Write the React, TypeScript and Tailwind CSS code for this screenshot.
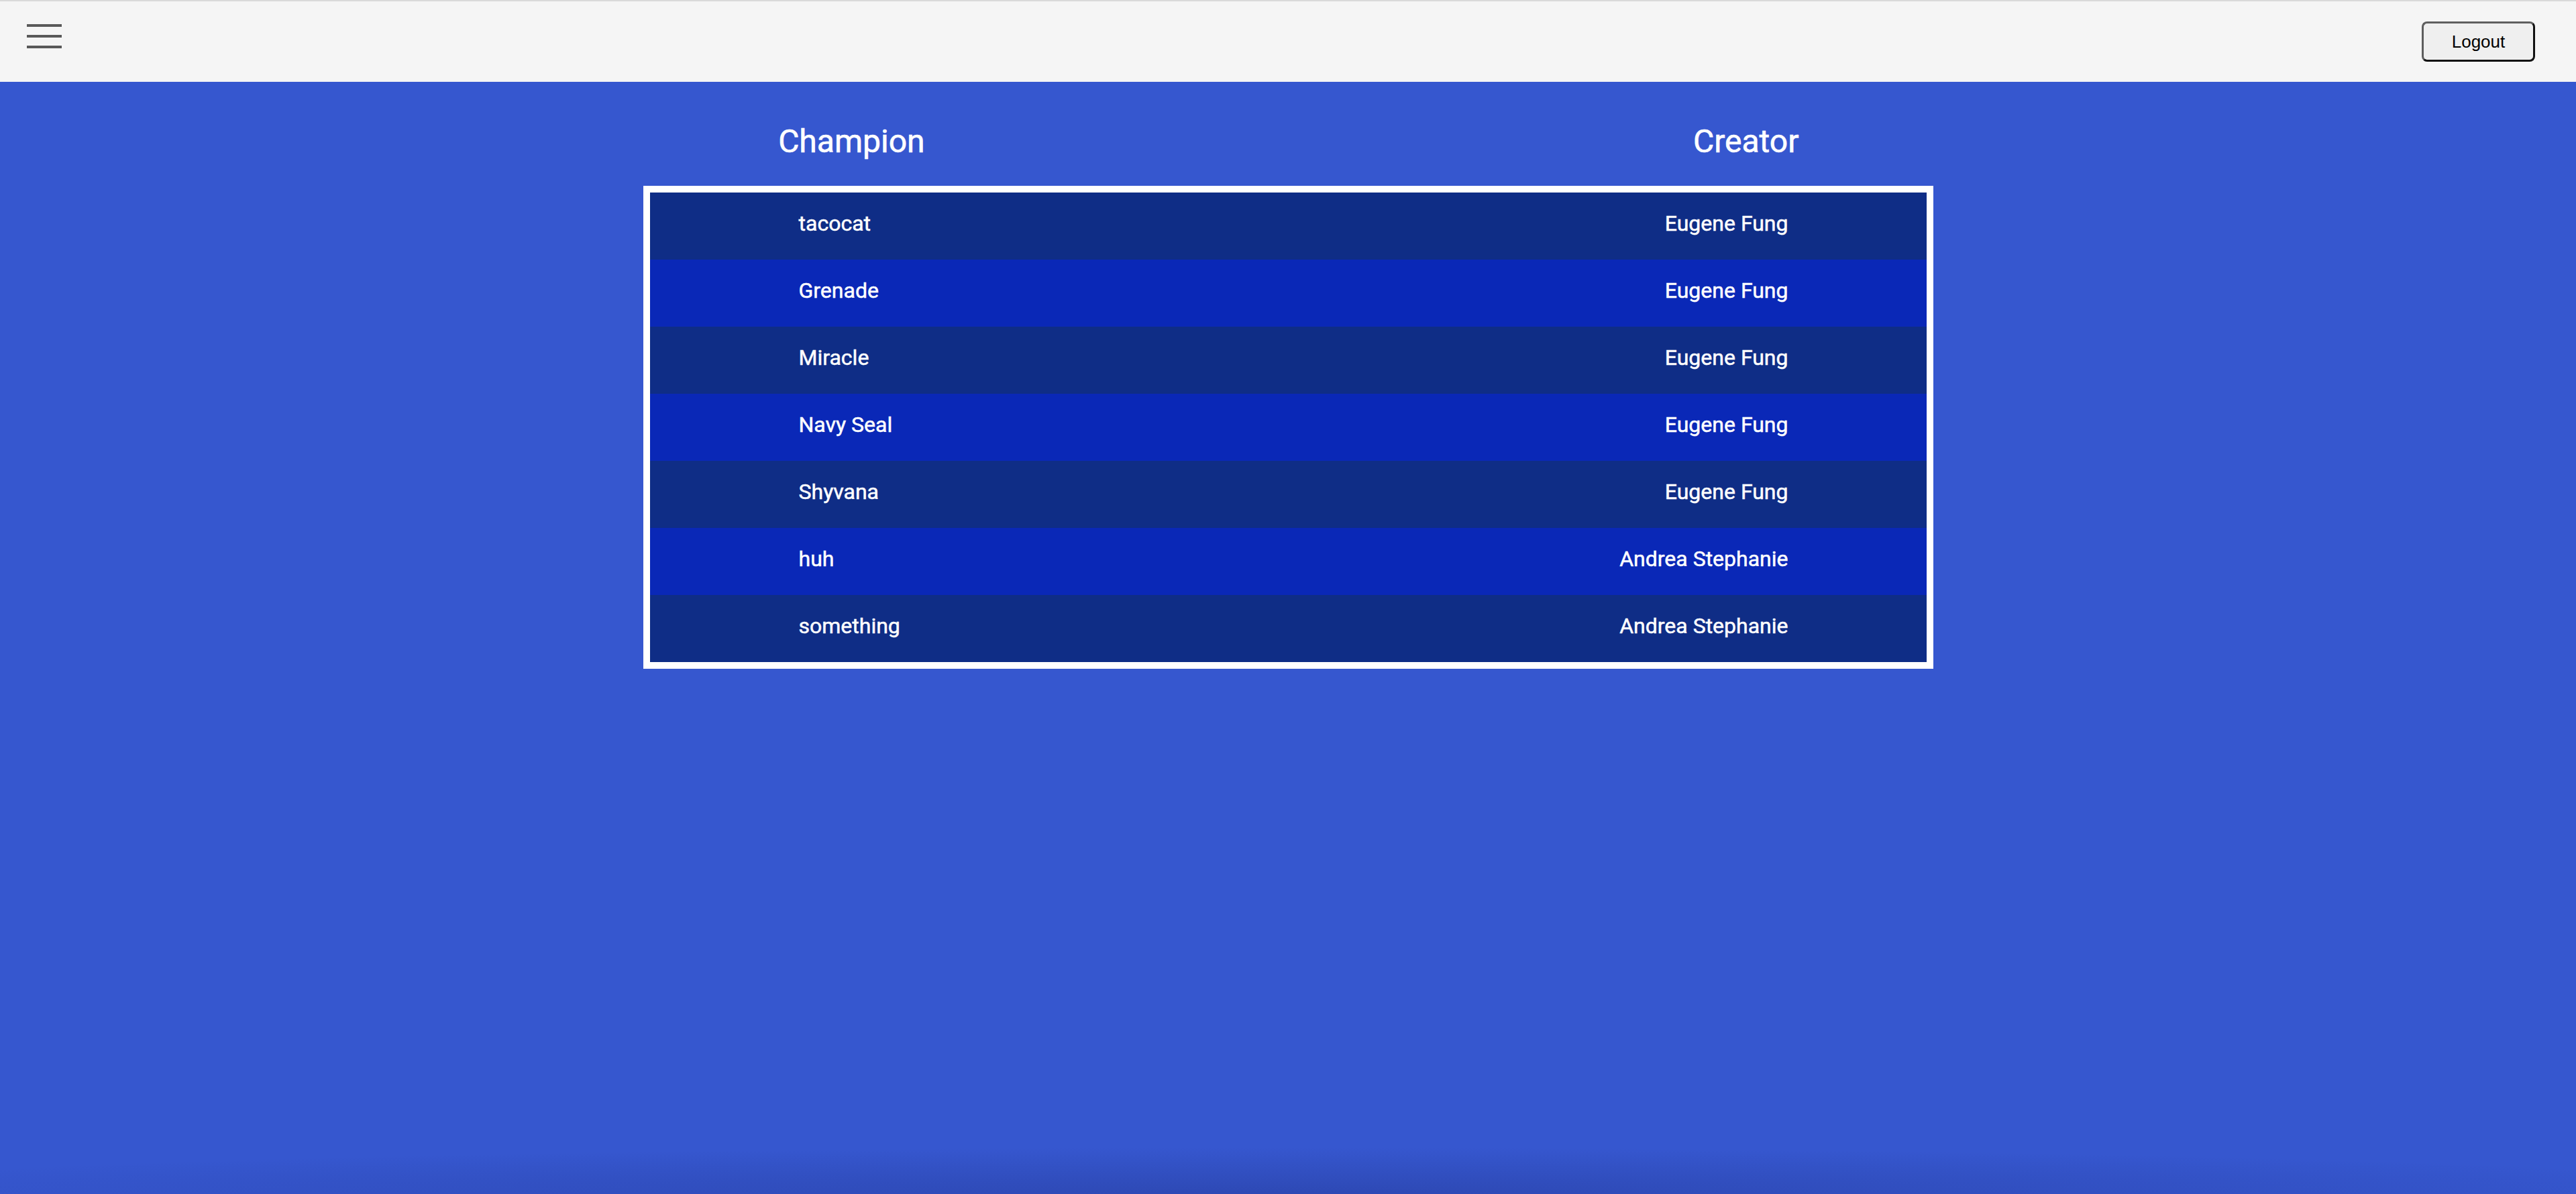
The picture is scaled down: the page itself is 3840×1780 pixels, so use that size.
import React from "react";

const rows: [string, string][] = [
  ["tacocat", "Eugene Fung"],
  ["Grenade", "Eugene Fung"],
  ["Miracle", "Eugene Fung"],
  ["Navy Seal", "Eugene Fung"],
  ["Shyvana", "Eugene Fung"],
  ["huh", "Andrea Stephanie"],
  ["something", "Andrea Stephanie"],
];

export default function App() {
  return (
    <div className="min-h-screen flex flex-col bg-[#3657cf]" style={{ fontFamily: "Roboto, 'Noto Sans', sans-serif" }}>
      <header className="h-[122px] shrink-0 bg-[#f5f5f5] border-t-2 border-[#d9d9d9] flex items-start justify-between">
        <div className="ml-[40px] mt-[34px] w-[52px] flex flex-col gap-[12px]">
          <span className="block h-[4px] bg-[#595959]" />
          <span className="block h-[4px] bg-[#595959]" />
          <span className="block h-[4px] bg-[#595959]" />
        </div>
        <button
          className="mt-[30px] mr-[61px] w-[169px] h-[60px] rounded-[8px] border-[3px] border-t-[#5e5e5e] border-l-[#5e5e5e] border-r-[#111111] border-b-[#111111] bg-[#efefef] text-black text-[26px] leading-none"
          style={{ fontFamily: "'Liberation Sans', Arial, sans-serif" }}
        >
          Logout
        </button>
      </header>
      <main className="flex-1 relative flex flex-col items-center bg-[radial-gradient(ellipse_60%_70px_at_50%_100%,rgba(20,30,100,0.25),rgba(20,30,100,0)_100%)]">
        <div className="mt-[61px] w-[2000px] grid grid-cols-3 translate-x-[16px] text-white text-[48px] leading-[56px] [-webkit-text-stroke:0.6px_white]">
          <div className="text-center">Champion</div>
          <div />
          <div className="text-center">Creator</div>
        </div>
        <div className="mt-[38px] w-[1923px] border-[10px] border-white">
          {rows.map(([name, creator], i) => (
            <div
              key={i}
              className={`h-[100px] flex items-start justify-between pt-[28px] pl-[222px] pr-[206px] text-white text-[32px] leading-[37.5px] [-webkit-text-stroke:0.5px_white] ${
                i % 2 === 0 ? "bg-[#0f2d86]" : "bg-[#0a28b7]"
              }`}
            >
              <span>{name}</span>
              <span>{creator}</span>
            </div>
          ))}
        </div>
      </main>
    </div>
  );
}
